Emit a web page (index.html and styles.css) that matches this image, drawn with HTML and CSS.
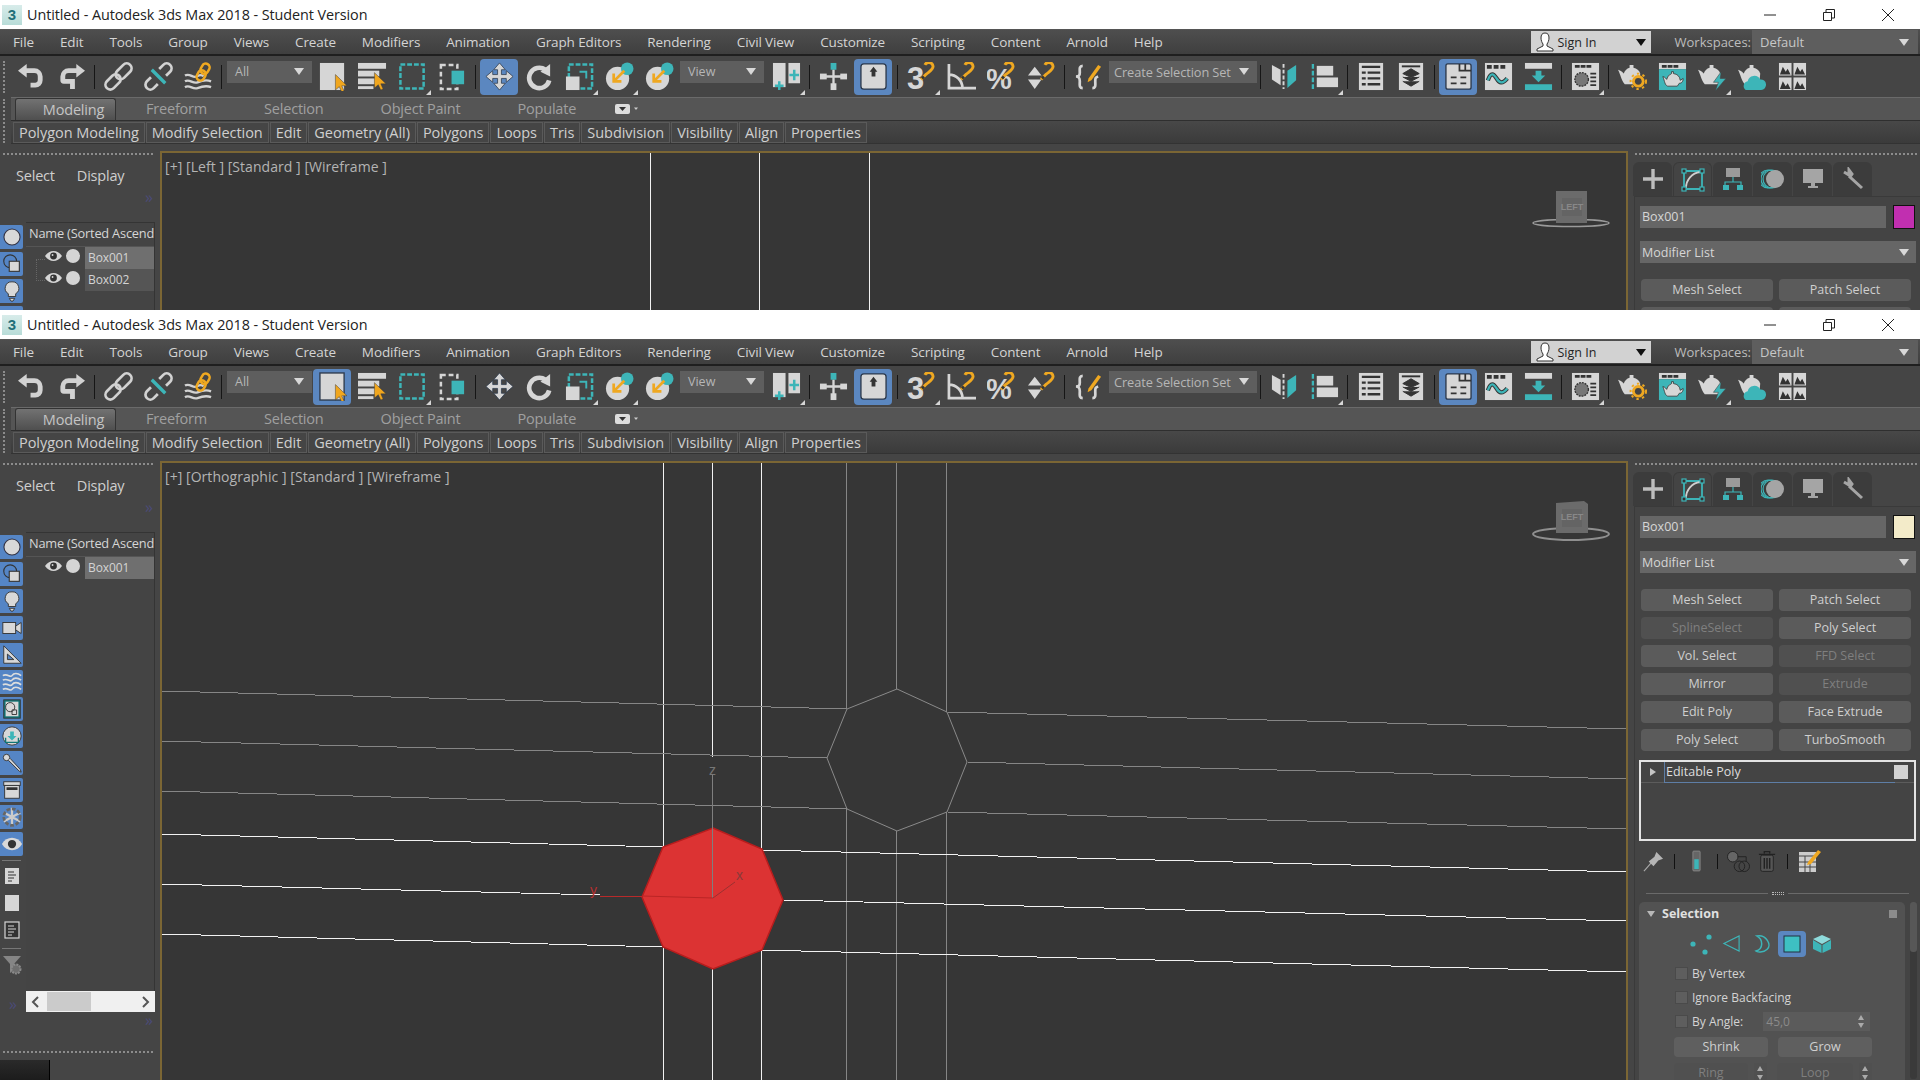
FILE: index.html
```html
<!DOCTYPE html>
<html lang="en">
<head>
<meta charset="utf-8">
<title>Untitled - Autodesk 3ds Max 2018 - Student Version</title>
<link rel="stylesheet" href="styles.css">
</head>
<body>
<svg class="sprite" width="0" height="0" aria-hidden="true">
<defs>
<g id="mag"><path d="M14.500 18 20 12.500c3-2.500 7-4.500 7-8A4.500 4.500 0 0 0 18.500 3" fill="none" stroke="#efa821" stroke-width="3"/><path d="M15.500 17 17.500 15" stroke="#333" stroke-width="3"/></g>
<g id="cur"><path d="M0 0V16L4 12.5 6.5 18 9 17 6.6 11.6H12Z" fill="#f0a61e" stroke="#3a3a3a" stroke-width=".5"/></g>
<symbol id="undo" viewBox="0 0 30 30"><path d="M9 9H18a6 6 0 0 1 6 6v4a5 5 0 0 1-5 5h-5" fill="none" stroke="#d2d2d2" stroke-width="5"/><path d="M1 9 10 2V16Z" fill="#d2d2d2"/></symbol>
<symbol id="redo" viewBox="0 0 30 30"><g transform="matrix(-1 0 0 1 30 0)"><path d="M9 9H18a6 6 0 0 1 6 6v4a1 1 0 0 1-1 1H14V28" fill="none" stroke="#d2d2d2" stroke-width="5"/><path d="M1 9 10 2V16Z" fill="#d2d2d2"/></g></symbol>
<symbol id="link" viewBox="0 0 30 30"><g transform="rotate(-45 15 15)" fill="none" stroke="#d2d2d2" stroke-width="2.8"><rect x="-2" y="10" width="18" height="10" rx="5"/><rect x="13" y="10" width="19" height="10" rx="5"/></g></symbol>
<symbol id="unlink" viewBox="0 0 30 30"><g transform="rotate(-45 15 15)" fill="none" stroke="#d2d2d2" stroke-width="2.8"><path d="M9 10H3a5 5 0 0 0 0 10h6M21 10h6a5 5 0 0 1 0 10h-6"/></g><path d="M8 8 22 22" stroke="#3db5b8" stroke-width="3.5"/></symbol>
<symbol id="bind" viewBox="0 0 30 30"><g fill="none" stroke="#d2d2d2" stroke-width="2.4"><path d="M1 14c5-3 8 3 12 1s6-2 7 0M1 20c5-3 8 3 13 1s9-3 14-1M1 26c5-3 8 3 13 1s9-3 14-1"/></g><g transform="rotate(-60 20 10)" fill="none" stroke="#efa821" stroke-width="2.6"><rect x="10" y="6" width="11" height="8" rx="4"/><rect x="18" y="6" width="11" height="8" rx="4"/></g></symbol>
<symbol id="select" viewBox="0 0 30 30"><rect x="2" y="1" width="25" height="28" fill="#d6d6d6"/><use href="#cur" transform="translate(18 13)"/></symbol>
<symbol id="selon" viewBox="0 0 30 30"><rect x="2" y="1" width="25" height="28" fill="#d6d6d6" stroke="#2d3a4d" stroke-width="1.4"/><use href="#cur" transform="translate(18 13)"/></symbol>
<symbol id="byname" viewBox="0 0 30 30"><g fill="#d6d6d6"><rect y="1" width="29" height="6"/><rect y="9" width="22" height="6"/><rect y="17" width="22" height="6"/><rect y="25" width="16" height="3"/></g><use href="#cur" transform="translate(17 11)"/></symbol>
<symbol id="rgn" viewBox="0 0 30 30"><rect x="2.5" y="2.5" width="24" height="25" fill="none" stroke="#3db5b8" stroke-width="2.6" stroke-dasharray="5 2"/></symbol>
<symbol id="win" viewBox="0 0 30 30"><rect x="3" y="3" width="17" height="25" fill="none" stroke="#d6d6d6" stroke-width="2.6" stroke-dasharray="5 3"/><rect x="14" y="9" width="13" height="14" fill="#3db5b8"/></symbol>
<symbol id="move" viewBox="0 0 30 30"><path d="M15 1 21 8H17V13H22V9L29 15 22 21V17H17V22H21L15 29 9 22H13V17H8V21L1 15 8 9V13H13V8H9Z" fill="#d6d6d6" stroke="#2d3a4d" stroke-width=".8"/></symbol>
<symbol id="rot" viewBox="0 0 30 30"><path d="M21 8A10.5 10.5 0 1 0 25 19" fill="none" stroke="#d6d6d6" stroke-width="4.8"/><path d="M14 9 24 1V14Z" fill="#d6d6d6" transform="translate(2 1)"/></symbol>
<symbol id="scale" viewBox="0 0 30 30"><rect x="4" y="2.5" width="24" height="25" fill="none" stroke="#3db5b8" stroke-width="2.6" stroke-dasharray="5 2"/><rect x="1" y="15" width="14" height="14" fill="#d6d6d6"/><path d="M15 10h7v7" fill="none" stroke="#3db5b8" stroke-width="2"/></symbol>
<symbol id="place" viewBox="0 0 30 30"><circle cx="13" cy="17" r="12" fill="#d6d6d6"/><circle cx="23" cy="7" r="6.5" fill="#3db5b8"/><path d="M20 9 9 20M9 12V20H17" fill="none" stroke="#efa821" stroke-width="2.8"/></symbol>
<symbol id="pivot" viewBox="0 0 30 30"><rect x="1" y="1" width="13" height="25" fill="#d6d6d6"/><rect x="17" y="1" width="12" height="21" fill="#d6d6d6"/><path d="M7.500 20v9M3 24.500h9M23 8v11M18 13.500h10" stroke="#3db5b8" stroke-width="2.6"/></symbol>
<symbol id="cross" viewBox="0 0 30 30"><rect x="12" y="1" width="6" height="7" fill="#3db5b8"/><path d="M15 8V23M2 15H28" stroke="#d6d6d6" stroke-width="2.400"/><rect x="1" y="12" width="7" height="6" fill="#d6d6d6"/><rect x="22" y="12" width="7" height="6" fill="#d6d6d6"/><rect x="12" y="22" width="6" height="7" fill="#d6d6d6"/></symbol>
<symbol id="key" viewBox="0 0 30 30"><rect x="2" y="2" width="26" height="26" rx="3" fill="#d6d6d6" stroke="#2d3a4d" stroke-width="1.400"/><path d="M11 10 15 5 19 10H17V15H13V10Z" fill="#333"/></symbol>
<symbol id="s3" viewBox="0 0 30 30"><text x="0" y="28" class="svgb" font-size="32" fill="#d6d6d6">3</text><use href="#mag"/></symbol>
<symbol id="sa" viewBox="0 0 30 30"><path d="M2 2V27H30M2 13a14 14 0 0 1 14 14" fill="none" stroke="#d6d6d6" stroke-width="2.800"/><use href="#mag"/></symbol>
<symbol id="sp" viewBox="0 0 30 30"><text x="-1" y="28" class="svgb" font-size="30" fill="#d6d6d6" textLength="28">%</text><use href="#mag"/></symbol>
<symbol id="ss" viewBox="0 0 30 30"><path d="M1 14 8 5 15 14ZM1 18H15L8 28Z" fill="#d6d6d6"/><use href="#mag"/></symbol>
<symbol id="brace" viewBox="0 0 30 30"><path d="M9 4C5 4 6 8 6 11S5 15 2 15C5 15 6 17 6 20S5 27 9 27M19 27C23 27 22 23 22 20S22 16 25 15" fill="none" stroke="#d6d6d6" stroke-width="2.800"/><path d="M15 17 25 3 28 5 18 19 14 21Z" fill="#efa821"/></symbol>
<symbol id="mirror" viewBox="0 0 30 30"><path d="M2 3 11 8V24L2 18Z" fill="#d6d6d6"/><path d="M14 2V28" stroke="#d6d6d6" stroke-width="2" stroke-dasharray="4 2"/><path d="M27 3 18 9V27L27 19Z" fill="#3db5b8"/></symbol>
<symbol id="align" viewBox="0 0 30 30"><path d="M3 2V28" stroke="#3db5b8" stroke-width="2.400" stroke-dasharray="5 2"/><rect x="7" y="4" width="17" height="10" fill="#d6d6d6"/><rect x="7" y="16" width="22" height="10" fill="#d6d6d6"/></symbol>
<symbol id="list" viewBox="0 0 30 30"><rect x="2" y="1" width="25" height="28" fill="#d6d6d6"/><path d="M5 5H24M5 11H9M11 11H24M5 17H9M11 17H24M5 23H9M11 23H24" stroke="#333" stroke-width="2.400"/></symbol>
<symbol id="layer" viewBox="0 0 30 30"><rect x="2" y="1" width="25" height="28" fill="#d6d6d6"/><path d="M5 4.500H24" stroke="#333" stroke-width="2"/><path d="M14.500 7 23 12 14.500 16 6 12ZM6 15.500 14.500 20 23 15.500M6 20 14.500 25 23 20" fill="#333" stroke="#333" stroke-width="1"/></symbol>
<symbol id="panel" viewBox="0 0 30 30"><rect x="2" y="2" width="26" height="26" rx="2" fill="#d6d6d6" stroke="#2d3a4d" stroke-width="1.400"/><path d="M16 2V9H28M22 2V9M7 16H13M17 16H23M7 22H13M17 22H23" fill="none" stroke="#333" stroke-width="1.800"/></symbol>
<symbol id="curve" viewBox="0 0 30 30"><rect x="1" y="1" width="28" height="28" fill="#d6d6d6"/><path d="M3 3h5v4H3zM10 3h5v4h-5zM17 3h5v4h-5z" fill="#333"/><path d="M4 19c3-9 6-7 9-2s6 6 11 0" fill="none" stroke="#333" stroke-width="4.500"/><path d="M4 19c3-9 6-7 9-2s6 6 11 0" fill="none" stroke="#3db5b8" stroke-width="2.400"/></symbol>
<symbol id="dl" viewBox="0 0 30 30"><rect x="1" y="1" width="28" height="6" fill="#d6d6d6"/><rect x="1" y="23" width="28" height="6" fill="#3db5b8"/><path d="M12 9H18V14H22L15 21 8 14H12Z" fill="#3db5b8"/></symbol>
<symbol id="mat" viewBox="0 0 30 30"><rect x="1" y="1" width="28" height="28" fill="#d6d6d6"/><path d="M4 3h5v3H4zM10 3h5v3h-5zM16 3h5v3h-5z" fill="#333"/><circle cx="11" cy="18" r="7" fill="#777" stroke="#333" stroke-width="1.400" stroke-dasharray="2 1"/><path d="M20 12h6M20 16h6M20 20h6M20 24h6" stroke="#333" stroke-width="1.800"/></symbol>
<g id="pot"><path d="M12 3h4v3a9 9 0 0 1 7 6L22 23H7C3 18 3 14 0 8 4 9 5 11 6 12A9 9 0 0 1 12 6Z" fill="#d6d6d6"/></g>
<symbol id="rs" viewBox="0 0 30 30"><use href="#pot"/><circle cx="21" cy="20" r="6.500" fill="#efa821"/><circle cx="21" cy="20" r="3.500" fill="#444"/><circle cx="21" cy="20" r="8" fill="none" stroke="#efa821" stroke-width="2" stroke-dasharray="2.500 3.500"/></symbol>
<symbol id="rf" viewBox="0 0 30 30"><rect x="1" y="1" width="28" height="6.500" fill="#d6d6d6"/><path d="M4 3h5v3H4zM10 3h5v3h-5zM16 3h5v3h-5z" fill="#333"/><rect x="1" y="7.500" width="28" height="21.500" fill="#3db5b8"/><path d="M14 10h2v2a8 8 0 0 1 7 7l3-2c0 4-2 5-4 5l-2 3H10C7 24 7 20 5 15 8 16 8 17 9 18A8 8 0 0 1 14 12Z" fill="#d6d6d6" stroke="#333" stroke-width=".8"/></symbol>
<symbol id="rb" viewBox="0 0 30 30"><use href="#pot"/><path d="M24 10 16 21H21L18 30 29 17H23Z" fill="#3db5b8" stroke="#444" stroke-width=".6"/></symbol>
<symbol id="rc" viewBox="0 0 30 30"><use href="#pot"/><path d="M8 29a5 5 0 0 1 2-9 7 7 0 0 1 13-2 5.500 5.500 0 0 1 1 11Z" fill="#3db5b8"/></symbol>
<symbol id="grid" viewBox="0 0 30 30"><g fill="#d6d6d6"><rect x="1" y="1" width="13" height="13"/><rect x="16" y="1" width="13" height="13"/><rect x="1" y="16" width="13" height="13"/><rect x="16" y="16" width="13" height="13"/></g><path d="M2 13 5 5 8 10 10 7 13 13ZM17 13 20 5 23 10 25 7 28 13ZM2 28 5 20 8 25 10 22 13 28ZM17 28 20 20 23 25 25 22 28 28Z" fill="#333"/></symbol>
<symbol id="eye" viewBox="0 0 18 12"><path d="M0 6C5-1 13-1 18 6 13 13 5 13 0 6Z" fill="#d6d6d6"/><circle cx="9" cy="6" r="3.600" fill="#333"/><circle cx="8" cy="5" r="1" fill="#d6d6d6"/></symbol>
<symbol id="l1" viewBox="0 0 24 24"><circle cx="12" cy="12" r="8.800" fill="#d8d8d8" stroke="#334" stroke-width="1.200"/></symbol>
<symbol id="l2" viewBox="0 0 24 24"><circle cx="10" cy="9" r="7" fill="none" stroke="#333" stroke-width="1.200"/><rect x="9" y="9" width="11" height="11" fill="#d8d8d8" stroke="#333" stroke-width="1.200"/></symbol>
<symbol id="l3" viewBox="0 0 24 24"><path d="M12 2a7 7 0 0 0-4 13v3h8v-3a7 7 0 0 0-4-13ZM9 20h6l-2 3h-2Z" fill="#d8d8d8" stroke="#333" stroke-width="1"/></symbol>
<symbol id="l4" viewBox="0 0 24 24"><rect x="2" y="6" width="14" height="12" fill="#d8d8d8" stroke="#333"/><path d="M16 10 22 6V18L16 14Z" fill="#d8d8d8" stroke="#333"/></symbol>
<symbol id="l5" viewBox="0 0 24 24"><path d="M3 2V21H22ZM7 11V17H14Z" fill="#d8d8d8" fill-rule="evenodd" stroke="#333"/></symbol>
<symbol id="l6" viewBox="0 0 24 24"><path d="M2 5c5-3 8 3 10 0s6-3 10 0M2 10c5-3 8 3 10 0s6-3 10 0M2 15c5-3 8 3 10 0s6-3 10 0M2 20c5-3 8 3 10 0s6-3 10 0" fill="none" stroke="#ddd" stroke-width="1.800"/></symbol>
<symbol id="l7" viewBox="0 0 24 24"><rect x="3" y="2" width="18" height="20" fill="#177" stroke="#333"/><path d="M5 4H19V20H5Z" fill="#d8d8d8"/><circle cx="10" cy="10" r="5" fill="#d8d8d8" stroke="#333"/><path d="M12 13h5v5h-5z" fill="none" stroke="#333"/></symbol>
<symbol id="l8" viewBox="0 0 24 24"><circle cx="12" cy="12" r="10" fill="#d8d8d8" stroke="#333"/><path d="M10 7h4v5h3l-5 5-5-5h3Z" fill="#3db5b8"/><path d="M5 14v5h14v-5" fill="none" stroke="#177" stroke-width="1.500"/></symbol>
<symbol id="l9" viewBox="0 0 24 24"><circle cx="6" cy="6" r="3.500" fill="#d8d8d8" stroke="#333"/><path d="M8 9 20 21 22 22 21 19 10 7" fill="#d8d8d8" stroke="#333"/></symbol>
<symbol id="l10" viewBox="0 0 24 24"><rect x="3" y="3" width="18" height="4" fill="#d8d8d8" stroke="#333"/><rect x="4" y="7" width="16" height="14" fill="#d8d8d8" stroke="#333"/><rect x="6" y="9" width="12" height="3" fill="#333"/></symbol>
<symbol id="l11" viewBox="0 0 24 24"><path d="M12 2V22M3 7 21 17M21 7 3 17" stroke="#ccc" stroke-width="2.500"/><circle cx="12" cy="12" r="9" fill="none" stroke="#666" stroke-width="3" stroke-dasharray="4 2"/></symbol>
<symbol id="l12" viewBox="0 0 24 24"><path d="M1 12C6 3 18 3 23 12 18 21 6 21 1 12Z" fill="#d8d8d8"/><circle cx="12" cy="12" r="4.500" fill="#333"/></symbol>
<symbol id="doc" viewBox="0 0 16 18"><rect x="1" y="1" width="14" height="16" fill="#d6d6d6"/><path d="M4 5H10M4 8H12M4 11H10M4 14H8" stroke="#333" stroke-width="1"/></symbol>
<symbol id="docd" viewBox="0 0 16 18"><rect x="1" y="1" width="14" height="16" fill="#333" stroke="#d6d6d6" stroke-width="1.200"/><path d="M4 5H10M4 8H12M4 11H10M4 14H8" stroke="#d6d6d6" stroke-width="1"/></symbol>
<symbol id="filt" viewBox="0 0 20 20"><path d="M1 1H19L12 9V15L8 18V9Z" fill="#858585"/><circle cx="14" cy="14" r="4.500" fill="#6f6f6f" stroke="#8a8a8a" stroke-width="2" stroke-dasharray="2 1"/></symbol>
<symbol id="t1" viewBox="0 0 24 24"><path d="M12 2V22M2 12H22" stroke="#bdbdbd" stroke-width="3.400"/></symbol>
<symbol id="t2" viewBox="0 0 24 24"><path d="M3 3H21V21H3Z" fill="none" stroke="#3db5b8" stroke-width="1.800"/><path d="M5 20C5 12 11 5 19 4" fill="none" stroke="#d0d0d0" stroke-width="1.800"/><g fill="#333" stroke="#3db5b8" stroke-width="1.200"><rect x="1" y="1" width="4" height="4"/><rect x="19" y="1" width="4" height="4"/><rect x="1" y="19" width="4" height="4"/><rect x="19" y="19" width="4" height="4"/></g></symbol>
<symbol id="t3" viewBox="0 0 24 24"><rect x="5" y="1" width="14" height="9" fill="#9a9a9a"/><path d="M12 10V15M4 19V15H20V19" fill="none" stroke="#3db5b8" stroke-width="1.200"/><rect x="2" y="18" width="6" height="5" fill="#3db5b8"/><rect x="16" y="18" width="6" height="5" fill="#3db5b8"/></symbol>
<symbol id="t4" viewBox="0 0 24 24"><g fill="none" stroke="#3db5b8" stroke-width="1.200"><circle cx="11" cy="12" r="9"/><circle cx="9" cy="12" r="9"/><circle cx="7" cy="12" r="9"/></g><circle cx="14" cy="12" r="9" fill="#a5a5a5"/></symbol>
<symbol id="t5" viewBox="0 0 24 24"><rect x="2" y="2" width="20" height="14" fill="#a5a5a5"/><rect x="10" y="16" width="4" height="3" fill="#a5a5a5"/><rect x="7" y="19" width="10" height="2" fill="#a5a5a5"/></symbol>
<symbol id="t6" viewBox="0 0 24 24"><path d="M3 5 8 8 8 3 11 7 9 10 21 21" fill="none" stroke="#a5a5a5" stroke-width="3"/></symbol>
<symbol id="pin" viewBox="0 0 22 22"><path d="M1 21 9 12" stroke="#aaa" stroke-width="1.200"/><path d="M14 1 21 8 16 10 11 16 6 11 12 6Z" fill="#b5b5b5"/></symbol>
<symbol id="tube" viewBox="0 0 10 24"><rect x="1" y="1" width="8" height="22" rx="1" fill="#666" stroke="#888"/><rect x="2.500" y="10" width="5" height="11" fill="#3db5b8"/></symbol>
<symbol id="uniq" viewBox="0 0 24 24"><circle cx="6" cy="7" r="5.500" fill="#666" stroke="#222"/><circle cx="13" cy="17" r="5.500" fill="none" stroke="#222"/><circle cx="18" cy="17" r="5.500" fill="none" stroke="#222"/><path d="M11 7H20V12" fill="none" stroke="#222"/></symbol>
<symbol id="trash" viewBox="0 0 20 24"><path d="M1 4H19M7 3V1H13V3" fill="none" stroke="#222" stroke-width="1.500"/><rect x="3" y="5" width="14" height="18" rx="2" fill="#555" stroke="#222"/><path d="M7 8V20M10 8V20M13 8V20" stroke="#222" stroke-width="1.600"/></symbol>
<symbol id="conf" viewBox="0 0 24 24"><rect x="1" y="3" width="17" height="20" fill="#ccc"/><path d="M1 7H18M1 13H18M1 18H18M7 7V23M12 13V23" stroke="#444"/><path d="M10 13 20 1 23 3 13 15 9 16Z" fill="#efa821"/></symbol>
<symbol id="vert" viewBox="0 0 22 22"><circle cx="3" cy="11" r="2.600" fill="#3db5b8"/><circle cx="19" cy="4" r="2.600" fill="#3db5b8"/><circle cx="15" cy="19" r="2.600" fill="#3db5b8"/></symbol>
<symbol id="edge" viewBox="0 0 20 20"><path d="M18 2V18L2 10Z" fill="none" stroke="#3db5b8" stroke-width="1.200"/></symbol>
<symbol id="bord" viewBox="0 0 18 20"><path d="M3 2C13 0 19 12 14 16 10 20 3 19 2 18 10 16 10 6 3 2Z" fill="none" stroke="#3db5b8" stroke-width="1.600"/></symbol>
<symbol id="poly" viewBox="0 0 20 20"><rect x="2" y="2" width="16" height="16" fill="#3ec0c2" stroke="#23303f" stroke-width="1"/></symbol>
<symbol id="elem" viewBox="0 0 20 20"><path d="M10 1 19 5 10 10 1 5Z" fill="#8edadb"/><path d="M1 6 9.500 11V19L1 15ZM19 6 10.500 11V19L19 15Z" fill="#3db5b8"/></symbol>
</defs>
</svg>

<section class="win win-a">
  <header class="titlebar">
    <span class="appicon"><b>3</b></span>
    <span class="title">Untitled - Autodesk 3ds Max 2018 - Student Version</span>
    <span class="winctl"><svg width="14" height="14" viewBox="0 0 14 14"><path d="M1 7H13" stroke="#222"/></svg><svg width="14" height="14" viewBox="0 0 14 14"><path d="M1.500 4.500H9.500V12.500H1.500ZM4 4V1.500H12.500V10H10" fill="none" stroke="#222"/></svg><svg width="14" height="14" viewBox="0 0 14 14"><path d="M1 1 13 13M13 1 1 13" stroke="#222"/></svg></span>
  </header>
  <nav class="menubar">
    <span>File</span><span>Edit</span><span>Tools</span><span>Group</span><span>Views</span><span>Create</span><span>Modifiers</span><span>Animation</span><span>Graph Editors</span><span>Rendering</span><span>Civil View</span><span>Customize</span><span>Scripting</span><span>Content</span><span>Arnold</span><span>Help</span>
    <div class="menu-right"><div class="signin"><svg width="18" height="20" viewBox="0 0 18 20"><path d="M9 1c3 0 4 2 4 5 0 2-1 5-2 6v2l6 3v2H1v-2l6-3v-2C6 11 5 8 5 6c0-3 1-5 4-5Z" fill="#fff" stroke="#333"/></svg><span class="signin-t">Sign In</span><i class="caret dark"></i></div><span class="ws">Workspaces:</span><div class="wsbox">Default<i class="caret"></i></div></div>
  </nav>
  <div class="toolbar">
    <i class="grip"></i>
    <span class="tb"><svg><use href="#undo"/></svg></span><span class="tb"><svg><use href="#redo"/></svg></span><i class="sep"></i>
    <span class="tb"><svg><use href="#link"/></svg></span><span class="tb"><svg><use href="#unlink"/></svg></span><span class="tb"><svg><use href="#bind"/></svg></span><i class="sep"></i>
    <div class="drop d-all">All<i class="caret"></i></div>
    <span class="tb"><svg><use href="#select"/></svg></span><span class="tb"><svg><use href="#byname"/></svg></span><span class="tb fly"><svg><use href="#rgn"/></svg></span><span class="tb"><svg><use href="#win"/></svg></span><i class="sep"></i>
    <span class="tb on"><svg><use href="#move"/></svg></span><span class="tb"><svg><use href="#rot"/></svg></span><span class="tb fly"><svg><use href="#scale"/></svg></span><span class="tb fly"><svg><use href="#place"/></svg></span><span class="tb"><svg><use href="#place"/></svg></span>
    <div class="drop d-view">View<i class="caret"></i></div>
    <span class="tb fly"><svg><use href="#pivot"/></svg></span><i class="sep"></i>
    <span class="tb"><svg><use href="#cross"/></svg></span><span class="tb on"><svg><use href="#key"/></svg></span><i class="sep"></i>
    <span class="tb fly"><svg><use href="#s3"/></svg></span><span class="tb"><svg><use href="#sa"/></svg></span><span class="tb"><svg><use href="#sp"/></svg></span><span class="tb"><svg><use href="#ss"/></svg></span><i class="sep"></i>
    <span class="tb"><svg><use href="#brace"/></svg></span>
    <div class="drop d-set">Create Selection Set<i class="caret"></i></div><i class="sep"></i>
    <span class="tb"><svg><use href="#mirror"/></svg></span><span class="tb fly"><svg><use href="#align"/></svg></span><i class="sep"></i>
    <span class="tb"><svg><use href="#list"/></svg></span><span class="tb"><svg><use href="#layer"/></svg></span><i class="sep"></i>
    <span class="tb on"><svg><use href="#panel"/></svg></span><span class="tb"><svg><use href="#curve"/></svg></span><span class="tb"><svg><use href="#dl"/></svg></span><i class="sep"></i>
    <span class="tb fly"><svg><use href="#mat"/></svg></span><i class="sep"></i>
    <span class="tb"><svg><use href="#rs"/></svg></span><span class="tb"><svg><use href="#rf"/></svg></span><span class="tb fly"><svg><use href="#rb"/></svg></span><span class="tb"><svg><use href="#rc"/></svg></span><span class="tb"><svg><use href="#grid"/></svg></span>
  </div>
  <div class="ribbon">
    <i class="grip rgrip"></i>
    <div class="ribbon-c">
      <div class="rtabs"><span class="rtab active">Modeling</span><span class="rtab t-ff">Freeform</span><span class="rtab t-x">Selection</span><span class="rtab t-x">Object Paint</span><span class="rtab t-x">Populate</span><svg class="rt-ic" width="24" height="10" viewBox="0 0 24 10"><rect x="1" y="0" width="15" height="10" rx="2" fill="#ddd"/><path d="M5 3H12L8.500 7Z" fill="#333"/><path d="M20 3.500H24L22 6Z" fill="#ccc"/></svg></div>
      <div class="rrow"><span class="rbtn">Polygon Modeling</span><span class="rbtn">Modify Selection</span><span class="rbtn">Edit</span><span class="rbtn">Geometry (All)</span><span class="rbtn">Polygons</span><span class="rbtn">Loops</span><span class="rbtn">Tris</span><span class="rbtn">Subdivision</span><span class="rbtn">Visibility</span><span class="rbtn">Align</span><span class="rbtn">Properties</span></div>
    </div>
  </div>
  <div class="main">
    <aside class="lpanel">
      <div class="dots"></div>
      <div class="ltabs"><span>Select</span><span>Display</span></div>
      <div class="chev lchev">&raquo;</div>
      <div class="lbody">
        <div class="strip">
          <span class="sbtn"><svg><use href="#l1"/></svg></span><span class="sbtn"><svg><use href="#l2"/></svg></span><span class="sbtn"><svg><use href="#l3"/></svg></span><span class="sbtn"><svg><use href="#l4"/></svg></span>
        </div>
        <div class="list">
          <div class="lhead">Name (Sorted Ascend</div>
          <div class="lrow"><i class="branch b1"></i><svg class="eye"><use href="#eye"/></svg><i class="dot"></i><span class="nm sel">Box001</span></div>
          <div class="lrow"><i class="branch b2"></i><svg class="eye"><use href="#eye"/></svg><i class="dot"></i><span class="nm">Box002</span></div>
        </div>
      </div>
    </aside>
    <div class="viewport">
      <span class="vplabel">[+] [Left ] [Standard ] [Wireframe ]</span>
      <svg class="vpsvg vp-a" viewBox="162 153 1464 157" shape-rendering="crispEdges">
        <path d="M650 153V310M759 153V310M869 153V310" class="ln-w"/>
        <g shape-rendering="auto">
          <ellipse cx="1571" cy="223" rx="38" ry="3.500" fill="none" stroke="#9a9a9a" stroke-width="1.500"/>
          <rect x="1556" y="191" width="31" height="32" fill="#6b6b6b"/>
          <rect x="1562" y="198" width="20" height="18" fill="#646464"/>
          <text x="1572" y="210" class="cube">LEFT</text>
        </g>
      </svg>
    </div>
    <aside class="rpanel">
      <div class="dots r"></div>
      <div class="rtabset"><span class="rt"><svg><use href="#t1"/></svg></span><span class="rt act"><svg><use href="#t2"/></svg></span><span class="rt"><svg><use href="#t3"/></svg></span><span class="rt"><svg><use href="#t4"/></svg></span><span class="rt"><svg><use href="#t5"/></svg></span><span class="rt"><svg><use href="#t6"/></svg></span></div>
      <div class="cmd">
        <div class="namerow"><div class="field">Box001</div><i class="swatch mag"></i></div>
        <div class="field modlist">Modifier List<i class="caret"></i></div>
        <div class="modgrid"><span class="mb">Mesh Select</span><span class="mb">Patch Select</span><span class="mb"></span><span class="mb"></span></div>
      </div>
    </aside>
  </div>
</section>

<section class="win win-b">
  <header class="titlebar">
    <span class="appicon"><b>3</b></span>
    <span class="title">Untitled - Autodesk 3ds Max 2018 - Student Version</span>
    <span class="winctl"><svg width="14" height="14" viewBox="0 0 14 14"><path d="M1 7H13" stroke="#222"/></svg><svg width="14" height="14" viewBox="0 0 14 14"><path d="M1.500 4.500H9.500V12.500H1.500ZM4 4V1.500H12.500V10H10" fill="none" stroke="#222"/></svg><svg width="14" height="14" viewBox="0 0 14 14"><path d="M1 1 13 13M13 1 1 13" stroke="#222"/></svg></span>
  </header>
  <nav class="menubar">
    <span>File</span><span>Edit</span><span>Tools</span><span>Group</span><span>Views</span><span>Create</span><span>Modifiers</span><span>Animation</span><span>Graph Editors</span><span>Rendering</span><span>Civil View</span><span>Customize</span><span>Scripting</span><span>Content</span><span>Arnold</span><span>Help</span>
    <div class="menu-right"><div class="signin"><svg width="18" height="20" viewBox="0 0 18 20"><path d="M9 1c3 0 4 2 4 5 0 2-1 5-2 6v2l6 3v2H1v-2l6-3v-2C6 11 5 8 5 6c0-3 1-5 4-5Z" fill="#fff" stroke="#333"/></svg><span class="signin-t">Sign In</span><i class="caret dark"></i></div><span class="ws">Workspaces:</span><div class="wsbox">Default<i class="caret"></i></div></div>
  </nav>
  <div class="toolbar">
    <i class="grip"></i>
    <span class="tb"><svg><use href="#undo"/></svg></span><span class="tb"><svg><use href="#redo"/></svg></span><i class="sep"></i>
    <span class="tb"><svg><use href="#link"/></svg></span><span class="tb"><svg><use href="#unlink"/></svg></span><span class="tb"><svg><use href="#bind"/></svg></span><i class="sep"></i>
    <div class="drop d-all">All<i class="caret"></i></div>
    <span class="tb on"><svg><use href="#selon"/></svg></span><span class="tb"><svg><use href="#byname"/></svg></span><span class="tb fly"><svg><use href="#rgn"/></svg></span><span class="tb"><svg><use href="#win"/></svg></span><i class="sep"></i>
    <span class="tb"><svg><use href="#move"/></svg></span><span class="tb"><svg><use href="#rot"/></svg></span><span class="tb fly"><svg><use href="#scale"/></svg></span><span class="tb fly"><svg><use href="#place"/></svg></span><span class="tb"><svg><use href="#place"/></svg></span>
    <div class="drop d-view">View<i class="caret"></i></div>
    <span class="tb fly"><svg><use href="#pivot"/></svg></span><i class="sep"></i>
    <span class="tb"><svg><use href="#cross"/></svg></span><span class="tb on"><svg><use href="#key"/></svg></span><i class="sep"></i>
    <span class="tb fly"><svg><use href="#s3"/></svg></span><span class="tb"><svg><use href="#sa"/></svg></span><span class="tb"><svg><use href="#sp"/></svg></span><span class="tb"><svg><use href="#ss"/></svg></span><i class="sep"></i>
    <span class="tb"><svg><use href="#brace"/></svg></span>
    <div class="drop d-set">Create Selection Set<i class="caret"></i></div><i class="sep"></i>
    <span class="tb"><svg><use href="#mirror"/></svg></span><span class="tb fly"><svg><use href="#align"/></svg></span><i class="sep"></i>
    <span class="tb"><svg><use href="#list"/></svg></span><span class="tb"><svg><use href="#layer"/></svg></span><i class="sep"></i>
    <span class="tb on"><svg><use href="#panel"/></svg></span><span class="tb"><svg><use href="#curve"/></svg></span><span class="tb"><svg><use href="#dl"/></svg></span><i class="sep"></i>
    <span class="tb fly"><svg><use href="#mat"/></svg></span><i class="sep"></i>
    <span class="tb"><svg><use href="#rs"/></svg></span><span class="tb"><svg><use href="#rf"/></svg></span><span class="tb fly"><svg><use href="#rb"/></svg></span><span class="tb"><svg><use href="#rc"/></svg></span><span class="tb"><svg><use href="#grid"/></svg></span>
  </div>
  <div class="ribbon">
    <i class="grip rgrip"></i>
    <div class="ribbon-c">
      <div class="rtabs"><span class="rtab active">Modeling</span><span class="rtab t-ff">Freeform</span><span class="rtab t-x">Selection</span><span class="rtab t-x">Object Paint</span><span class="rtab t-x">Populate</span><svg class="rt-ic" width="24" height="10" viewBox="0 0 24 10"><rect x="1" y="0" width="15" height="10" rx="2" fill="#ddd"/><path d="M5 3H12L8.500 7Z" fill="#333"/><path d="M20 3.500H24L22 6Z" fill="#ccc"/></svg></div>
      <div class="rrow"><span class="rbtn">Polygon Modeling</span><span class="rbtn">Modify Selection</span><span class="rbtn">Edit</span><span class="rbtn">Geometry (All)</span><span class="rbtn">Polygons</span><span class="rbtn">Loops</span><span class="rbtn">Tris</span><span class="rbtn">Subdivision</span><span class="rbtn">Visibility</span><span class="rbtn">Align</span><span class="rbtn">Properties</span></div>
    </div>
  </div>
  <div class="main">
    <aside class="lpanel">
      <div class="dots"></div>
      <div class="ltabs"><span>Select</span><span>Display</span></div>
      <div class="chev lchev">&raquo;</div>
      <div class="lbody">
        <div class="strip">
          <span class="sbtn"><svg><use href="#l1"/></svg></span><span class="sbtn"><svg><use href="#l2"/></svg></span><span class="sbtn"><svg><use href="#l3"/></svg></span><span class="sbtn"><svg><use href="#l4"/></svg></span><span class="sbtn"><svg><use href="#l5"/></svg></span><span class="sbtn"><svg><use href="#l6"/></svg></span><span class="sbtn"><svg><use href="#l7"/></svg></span><span class="sbtn"><svg><use href="#l8"/></svg></span><span class="sbtn"><svg><use href="#l9"/></svg></span><span class="sbtn"><svg><use href="#l10"/></svg></span><span class="sbtn"><svg><use href="#l11"/></svg></span><span class="sbtn"><svg><use href="#l12"/></svg></span>
          <i class="sline"></i>
          <span class="sdoc"><svg><use href="#doc"/></svg></span><span class="sdoc"><svg viewBox="0 0 16 18"><rect x="1" y="1" width="14" height="16" fill="#d6d6d6"/></svg></span><span class="sdoc"><svg><use href="#docd"/></svg></span>
          <i class="sline"></i>
          <span class="sdoc sfilt"><svg><use href="#filt"/></svg></span>
          <div class="chev schev">&raquo;</div>
        </div>
        <div class="list full">
          <div class="lhead">Name (Sorted Ascend</div>
          <div class="lrow"><i class="branch"></i><svg class="eye"><use href="#eye"/></svg><i class="dot"></i><span class="nm sel">Box001</span></div>
          <div class="hscroll"><svg width="10" height="12" viewBox="0 0 10 12"><path d="M7 1 2 6 7 11" fill="none" stroke="#555" stroke-width="2"/></svg><i class="thumb"></i><svg width="10" height="12" viewBox="0 0 10 12"><path d="M3 1 8 6 3 11" fill="none" stroke="#555" stroke-width="2"/></svg></div>
        </div>
      </div>
      <div class="chev lchev2">&raquo;</div>
      <div class="dots low"></div>
      <div class="blackbox"></div>
    </aside>
    <div class="viewport">
      <span class="vplabel">[+] [Orthographic ] [Standard ] [Wireframe ]</span>
      <svg class="vpsvg vp-b" viewBox="162 463 1464 617" shape-rendering="crispEdges">
        <path d="M663.500 463V847M663.500 947V1080M761.500 463V850M761.500 950V1080M712.500 463V757M712.500 969V1080" class="ln-w"/>
        <path d="M846.500 463V709M846.500 809V1080M896.500 463V689M896.500 831V1080M946.500 463V712M946.500 812V1080" class="ln-g"/>
        <path d="M162 691 847 709M947 712 1626 729M162 741 827 758M967 762 1626 779M162 791 847 809M947 812 1626 829" class="ln-g"/>
        <path d="M162 834 664 847M762 850 1626 872M162 884 600 895M783 900 1626 921M162 934 664 947M762 950 1626 972" class="ln-w"/>
        <path d="M713 828 762 849 783 900 762 950 713 969 663 947 642 897 663 847Z" class="oct-r" shape-rendering="auto"/>
        <path d="M897 689 947 712 967 762 947 812 897 831 847 809 827 758 847 709Z" class="oct-g" shape-rendering="auto"/>
        <path d="M712.500 775V898" stroke="#7f7f7f"/>
        <path d="M600 896H642" stroke="#b82a2a"/>
        <g shape-rendering="auto">
          <path d="M642 896 713 898" stroke="#bb2525" fill="none"/>
          <path d="M713 898 735 882" stroke="#9c3030" fill="none"/>
          <text x="590" y="895" class="axis ax-r">y</text>
          <text x="736" y="880" class="axis ax-d">x</text>
          <text x="709" y="775" class="axis ax-g">z</text>
          <ellipse cx="1571" cy="534" rx="38" ry="6" fill="none" stroke="#8f8f8f" stroke-width="2"/>
          <path d="M1556 503 1584 501 1588 504V533H1556Z" fill="#6b6b6b"/>
          <rect x="1562" y="509" width="20" height="18" fill="#646464"/>
          <text x="1572" y="520" class="cube">LEFT</text>
        </g>
      </svg>
    </div>
    <aside class="rpanel">
      <div class="dots r"></div>
      <div class="rtabset"><span class="rt"><svg><use href="#t1"/></svg></span><span class="rt act"><svg><use href="#t2"/></svg></span><span class="rt"><svg><use href="#t3"/></svg></span><span class="rt"><svg><use href="#t4"/></svg></span><span class="rt"><svg><use href="#t5"/></svg></span><span class="rt"><svg><use href="#t6"/></svg></span></div>
      <div class="cmd">
        <div class="namerow"><div class="field">Box001</div><i class="swatch cream"></i></div>
        <div class="field modlist">Modifier List<i class="caret"></i></div>
        <div class="modgrid"><span class="mb">Mesh Select</span><span class="mb">Patch Select</span><span class="mb dis">SplineSelect</span><span class="mb">Poly Select</span><span class="mb">Vol. Select</span><span class="mb dis">FFD Select</span><span class="mb">Mirror</span><span class="mb dis">Extrude</span><span class="mb">Edit Poly</span><span class="mb">Face Extrude</span><span class="mb">Poly Select</span><span class="mb">TurboSmooth</span></div>
        <div class="stack"><div class="stackrow"><i class="stri"></i><span class="stxt">Editable Poly</span><i class="ssw"></i></div></div>
        <div class="stools"><svg class="st-pin"><use href="#pin"/></svg><i class="vbar"></i><svg class="st-tube"><use href="#tube"/></svg><i class="vbar"></i><svg class="st-uniq"><use href="#uniq"/></svg><svg class="st-trash"><use href="#trash"/></svg><i class="vbar"></i><svg class="st-conf"><use href="#conf"/></svg></div>
        <div class="divider"><i></i><b></b><i></i></div>
        <div class="rollwrap">
          <div class="rollout">
            <div class="rhead"><i class="rtri"></i><span>Selection</span><i class="rgrip2"></i></div>
            <div class="subs"><svg class="s-v"><use href="#vert"/></svg><svg class="s-e"><use href="#edge"/></svg><svg class="s-b"><use href="#bord"/></svg><span class="s-on"><svg><use href="#poly"/></svg></span><svg class="s-el"><use href="#elem"/></svg></div>
            <div class="chk"><i></i>By Vertex</div>
            <div class="chk"><i></i>Ignore Backfacing</div>
            <div class="chk ang"><i></i>By Angle:<span class="spin">45,0<u class="arrs"></u></span></div>
            <div class="pair"><span class="pb">Shrink</span><span class="pb">Grow</span></div>
            <div class="pair low"><span class="pb dis">Ring</span><u class="arrs box"></u><span class="pb dis">Loop</span><u class="arrs box"></u></div>
          </div>
          <div class="vscroll"><i></i></div>
        </div>
      </div>
    </aside>
  </div>
</section>
</body>
</html>
```
FILE: styles.css
```css
* { box-sizing: border-box; }
html, body { margin: 0; padding: 0; width: 1920px; height: 1080px; overflow: hidden; background: #444; }
body { font-family: "Open Sans", "Noto Sans", sans-serif; font-size: 13px; color: #cfcfcf; }
i, u { display: block; font-style: normal; text-decoration: none; }
.sprite { position: absolute; }

.win { display: flex; flex-direction: column; overflow: hidden; background: #454545; }
.win-a { height: 310px; }
.win-b { height: 770px; }

.titlebar { height: 29px; flex: none; background: #fff; display: flex; align-items: center; }
.appicon { width: 20px; height: 20px; margin-left: 2px; background: linear-gradient(#d8ecea, #b8dcd8); display: flex; justify-content: center; }
.appicon b { font: bold 15px/20px "Liberation Sans", sans-serif; color: #1f6f7a; }
.title { margin-left: 5px; font-size: 14.4px; color: #222; letter-spacing: -.08px; white-space: nowrap; }
.winctl { margin-left: auto; display: flex; gap: 45px; margin-right: 25px; }

.menubar { height: 27px; flex: none; display: flex; align-items: center; padding-left: 13px; background: linear-gradient(#4e4e4e, #3f3f3f); border-top: 1px solid #555; border-bottom: 2px solid #1f1f1f; font-size: 13.5px; letter-spacing: -.12px; color: #d4d4d4; }
.menubar > span { margin-right: 26px; }
.menu-right { margin-left: auto; display: flex; align-items: center; padding-right: 2px; letter-spacing: 0; }
.signin { width: 120px; height: 22px; background: #d2d2d2; color: #222; display: flex; align-items: center; padding: 0 5px; position: relative; }
.signin-t { margin-left: 4px; font-size: 12.5px; }
.ws { margin-left: 24px; color: #bdbdbd; font-size: 13px; }
.wsbox { width: 166px; height: 24px; margin-left: 1px; background: #5e5e5e; color: #c8c8c8; display: flex; align-items: center; padding-left: 8px; position: relative; font-size: 13px; }
.caret { width: 0; height: 0; border: 5px solid transparent; border-top: 7px solid #d8d8d8; border-bottom: 0; margin-left: auto; }
.signin .caret.dark { border-top-color: #111; margin-right: 0; }
.wsbox .caret { margin-right: 9px; }

.toolbar { height: 41px; flex: none; display: flex; align-items: center; background: #454545; }
.grip { width: 2px; height: 32px; margin: 0 6px 0 3px; flex: none; border-left: 2px dotted #8c8c8c; }
.tb { width: 40px; height: 36px; flex: none; display: flex; align-items: center; justify-content: center; position: relative; }
.tb svg { width: 29px; height: 29px; }
.tb.on::before { content: ""; position: absolute; left: 1px; top: 0; width: 38px; height: 36px; background: #5b87c0; border-radius: 4px; }
.tb.on svg { position: relative; }
.tb.fly::after { content: ""; position: absolute; right: 1px; bottom: 0; width: 0; height: 0; border-left: 5px solid transparent; border-bottom: 5px solid #d6d6d6; }
.sep { width: 1px; height: 24px; margin: 0 3px; flex: none; background: #161616; }
.drop { height: 22px; flex: none; margin-bottom: 10px; background: #5e5e5e; color: #b6b6b6; font-size: 12.5px; display: flex; align-items: center; padding-left: 8px; padding-right: 8px; }
.d-all { width: 85px; margin-left: 2px; margin-right: 0; }
.d-view { width: 84px; margin-left: 1px; margin-right: 2px; }
.d-set { width: 148px; margin-left: 1px; padding-left: 5px; font-size: 12.8px; letter-spacing: -.1px; }
.tb.on + .sep { margin-left: 4px; }

.ribbon { height: 47px; flex: none; display: flex; background: #454545; }
.rgrip { height: 44px; margin: 2px 6px 0 3px; }
.ribbon-c { flex: 1; display: flex; flex-direction: column; }
.rtabs { height: 24px; display: flex; align-items: flex-end; padding-left: 4px; background: #555; border-top: 1px solid #6a6a6a; border-bottom: 1px solid #2f2f2f; font-size: 14.5px; letter-spacing: -.2px; color: #a0a0a0; }
.rtab { height: 22px; line-height: 21px; }
.rtab.active { width: 101px; text-align: center; padding-left: 16px; background: linear-gradient(#727272, #4f4f4f); border: 1px solid #333; border-bottom: 0; border-radius: 3px 3px 0 0; color: #c4c4c4; }
.t-ff { margin-left: 30px; }
.t-x { margin-left: 57px; }
.rt-ic { align-self: center; margin-left: 38px; }
.rrow { height: 23px; display: flex; align-items: center; gap: 1px; padding-left: 2px; background: linear-gradient(#484848, #3b3b3b); font-size: 14.5px; letter-spacing: -.04px; color: #cfcfcf; border-bottom: 1px solid #333; }
.rbtn { height: 21px; line-height: 19px; padding: 0 5px; background: #454545; border: 1px solid #5a5a5a; white-space: nowrap; }

.main { flex: 1; min-height: 0; display: flex; background: #454545; }
.lpanel { width: 160px; flex: none; }
.dots { height: 2px; margin: 9px 7px 0 3px; border-top: 2px dotted #8c8c8c; }
.ltabs { display: flex; gap: 22px; padding-left: 16px; margin-top: 11px; font-size: 14.5px; letter-spacing: -.2px; color: #cfcfcf; line-height: 20px; }
.chev { color: #4b4b78; font-size: 16px; line-height: 16px; }
.lchev { text-align: right; padding-right: 7px; margin-top: 3px; height: 16px; }
.lbody { display: flex; margin-top: 17px; }
.strip { width: 26px; flex: none; padding-top: 3px; }
.sbtn { display: flex; align-items: center; justify-content: center; width: 23px; height: 24px; margin-bottom: 3px; background: #5585c5; border-radius: 0 2px 2px 0; }
.sbtn svg { width: 22px; height: 22px; }
.sline { width: 19px; height: 1px; margin: 4px 0 6px 2px; background: #777; }
.sdoc { display: flex; justify-content: center; width: 23px; height: 18px; margin-bottom: 9px; }
.sdoc svg { width: 16px; height: 18px; }
.sfilt { margin-top: 1px; margin-bottom: 0; }
.sfilt svg { width: 20px; height: 20px; }
.schev { padding-left: 9px; margin-top: 23px; }
.list { width: 129px; display: flex; flex-direction: column; border-right: 1px solid #343434; border-top: 1px solid #343434; background: #444; }
.list.full { height: 480px; }
.lhead { height: 24px; line-height: 21px; padding-left: 3px; font-size: 12.8px; letter-spacing: -.2px; white-space: nowrap; overflow: hidden; color: #d6d6d6; border-bottom: 1px solid #555; }
.lrow { height: 22px; display: flex; align-items: center; padding-left: 10px; }
.branch { width: 9px; height: 11px; flex: none; }
.branch.b1 { height: 1px; border-top: 1px dotted #666; margin-top: 2px; }
.branch.b2 { border-left: 1px dotted #666; border-bottom: 1px dotted #666; height: 22px; margin-top: -20px; }
.eye { width: 17px; height: 12px; flex: none; margin-top: -4px; }
.dot { width: 14px; height: 14px; margin: -4px 5px 0 4px; border-radius: 50%; background: #d4d4d4; flex: none; }
.nm { flex: 1; height: 22px; line-height: 22px; padding-left: 3px; background: #555; font-size: 12px; letter-spacing: -.1px; color: #d4d4d4; }
.nm.sel { background: #6f6f6f; }
.hscroll { margin-top: auto; height: 21px; display: flex; align-items: center; background: #f0f0f0; padding-left: 5px; margin-right: -1px; justify-content: space-between; padding-right: 5px; }
.thumb { width: 44px; height: 19px; background: #cbcbcb; margin-left: 6px; margin-right: auto; }
.lchev2 { text-align: right; padding-right: 7px; margin-top: 0; height: 16px; }
.dots.low { margin-top: 23px; }
.blackbox { width: 50px; height: 20px; margin-top: 7px; background: linear-gradient(#2a2a2a, #1c1c1c); border-right: 1px solid #000; }

.viewport { width: 1468px; flex: none; margin-top: 7px; position: relative; background: #363636; border: 2px solid #7b6634; border-bottom: 0; }
.vplabel { position: absolute; left: 3px; top: 4px; font-size: 14px; letter-spacing: .05px; color: #b4b4b4; white-space: nowrap; }
.vpsvg { display: block; width: 1464px; }
.vp-a { height: 157px; }
.vp-b { height: 617px; }
.ln-w { stroke: #f2f2f2; stroke-width: 1; fill: none; }
.ln-g { stroke: #868686; stroke-width: 1; fill: none; }
.oct-r { fill: #dc3333; stroke: #b81d1d; stroke-width: 1.5; }
.oct-g { fill: none; stroke: #8a8a8a; stroke-width: 1; }
.axis { font-family: "Liberation Sans", sans-serif; font-size: 14px; }
.ax-r { fill: #b53030; }
.ax-d { fill: #8a3a3a; }
.ax-g { fill: #777; }
.cube { font: bold 9px "Liberation Sans", sans-serif; fill: #888; text-anchor: middle; }
.svgb { font-family: "Liberation Sans", sans-serif; font-weight: bold; }

.rpanel { flex: 1; min-width: 0; }
.dots.r { margin: 9px 3px 0 7px; }
.rtabset { display: flex; gap: 1px; margin-top: 7px; padding-left: 5px; }
.rt { width: 39px; height: 34px; display: flex; align-items: center; justify-content: center; background: #3c3c3c; border-radius: 6px 6px 0 0; }
.rt.act { background: #444; border: 1px solid #3a3a3a; border-bottom: 0; }
.rt svg { width: 24px; height: 24px; }
.cmd { margin-left: 6px; padding: 8px 0 0 5px; background: #444; border-left: 1px solid #3a3a3a; border-top: 1px solid #3a3a3a; }
.namerow { display: flex; align-items: center; height: 23px; }
.field { height: 22px; width: 246px; background: #666; padding-left: 2px; line-height: 21px; font-size: 12.5px; color: #d6d6d6; }
.swatch { width: 22px; height: 24px; margin-left: 7px; border: 1px solid #111; }
.swatch.mag { background: #c12fb0; }
.swatch.cream { background: #f3ebc9; }
.modlist { width: 276px; margin-top: 13px; display: flex; align-items: center; }
.modlist .caret { margin-right: 7px; }
.modgrid { display: grid; grid-template-columns: 132px 132px; gap: 6px; margin: 16px 0 0 1px; grid-auto-rows: 22px; }
.mb { height: 22px; line-height: 21px; text-align: center; background: #5b5b5b; border-radius: 4px; font-size: 12.5px; color: #cfcfcf; }
.mb.dis, .pb.dis { background: #505050; color: #7f7f7f; }
.stack { width: 277px; height: 81px; margin-top: 9px; margin-left: -1px; border: 2px solid #e4e4e4; background: #444; }
.stackrow { height: 21px; display: flex; align-items: center; padding-left: 9px; border-bottom: 1px solid #5c5c5c; }
.stri { width: 0; height: 0; border-left: 6px solid #c4c4c4; border-top: 4px solid transparent; border-bottom: 4px solid transparent; }
.stxt { flex: 1; height: 21px; margin-left: 8px; padding-left: 1px; font-size: 12.5px; line-height: 20px; color: #ddd; border: 1px solid #5e7ea6; border-top: 0; border-right: 0; display: block; }
.ssw { width: 14px; height: 14px; margin: 0 5px 0 0; background: #d2d2d2; position: relative; left: -1px; }
.stools { display: flex; align-items: center; height: 24px; margin-top: 8px; padding-left: 3px; }
.stools svg { flex: none; }
.st-pin { width: 21px; height: 21px; }
.vbar { width: 1px; height: 15px; background: #111; margin: 0 17px 0 10px; }
.st-tube { width: 9px; height: 24px; }
.st-tube + .vbar { margin-left: 16px; margin-right: 9px; }
.st-uniq { width: 23px; height: 23px; }
.st-trash { width: 18px; height: 23px; margin-left: 8px; }
.st-trash + .vbar { margin-left: 11px; margin-right: 10px; }
.st-conf { width: 24px; height: 24px; }
.divider { display: flex; align-items: center; gap: 4px; height: 10px; margin: 15px 0 0 6px; width: 263px; }
.divider i { flex: 1; height: 1px; background: #6a6a6a; }
.divider b { width: 12px; height: 3px; border-top: 1px dotted #bbb; border-bottom: 1px dotted #bbb; }
.rollwrap { display: flex; margin-top: 4px; margin-left: -1px; }
.rollout { width: 266px; height: 180px; background: #525252; border-radius: 5px 5px 0 0; padding-top: 1px; }
.rhead { display: flex; align-items: center; height: 21px; padding-left: 8px; font-weight: 700; font-size: 12.5px; color: #e0e0e0; }
.rtri { width: 0; height: 0; border: 4px solid transparent; border-top: 6px solid #b8b8b8; border-bottom: 0; margin-right: 7px; }
.rgrip2 { width: 8px; height: 8px; margin-left: auto; margin-right: 8px; background-image: radial-gradient(#8c8c8c 1px, transparent 1px); background-size: 2px 2px; }
.subs { display: flex; align-items: center; height: 27px; margin-top: 6px; padding-left: 51px; }
.s-v { width: 22px; height: 22px; }
.s-e { width: 19px; height: 19px; margin-left: 10px; }
.s-b { width: 17px; height: 19px; margin-left: 13px; }
.s-on { width: 28px; height: 26px; margin-left: 7px; background: #5b87c0; border-radius: 4px; display: flex; align-items: center; justify-content: center; }
.s-on svg { width: 20px; height: 20px; }
.s-el { width: 20px; height: 20px; margin-left: 6px; }
.chk { display: flex; align-items: center; height: 24.4px; padding-left: 36px; font-size: 12px; color: #d4d4d4; }
.subs + .chk { margin-top: 4px; }
.chk i { width: 13px; height: 13px; margin-right: 4px; background: #5e5e5e; border: 1px solid #4a4a4a; }
.spin { width: 107px; height: 19px; margin-left: 20px; padding-left: 3px; line-height: 18px; background: #5b5b5b; color: #8a8a8a; display: flex; align-items: center; justify-content: space-between; padding-right: 5px; }
.arrs { width: 7px; height: 13px; position: relative; }
.arrs::before, .arrs::after { content: ""; position: absolute; left: 0; width: 0; height: 0; border-left: 3.500px solid transparent; border-right: 3.500px solid transparent; }
.arrs::before { top: 0; border-bottom: 5px solid #aaa; }
.arrs::after { bottom: 0; border-top: 5px solid #aaa; }
.pair { display: flex; gap: 10px; padding-left: 35px; margin-top: 3px; }
.pb { width: 94px; height: 20px; line-height: 19px; text-align: center; background: #5f5f5f; border-radius: 4px; font-size: 12.5px; color: #d0d0d0; }
.pair.low { margin-top: 6px; gap: 6px; }
.pair.low .pb { width: 74px; }
.arrs.box { width: 13px; height: 20px; background: #505050; }
.arrs.box::before { top: 3px; left: 3px; }
.arrs.box::after { bottom: 3px; left: 3px; }
.pair.low .arrs.box + .pb { margin-left: 4px; width: 76px; }
.vscroll { width: 7px; height: 177px; margin-left: 5px; background: #3a3a3a; border-radius: 3px; }
.vscroll i { height: 50px; background: #575757; border-radius: 3px; }
```
